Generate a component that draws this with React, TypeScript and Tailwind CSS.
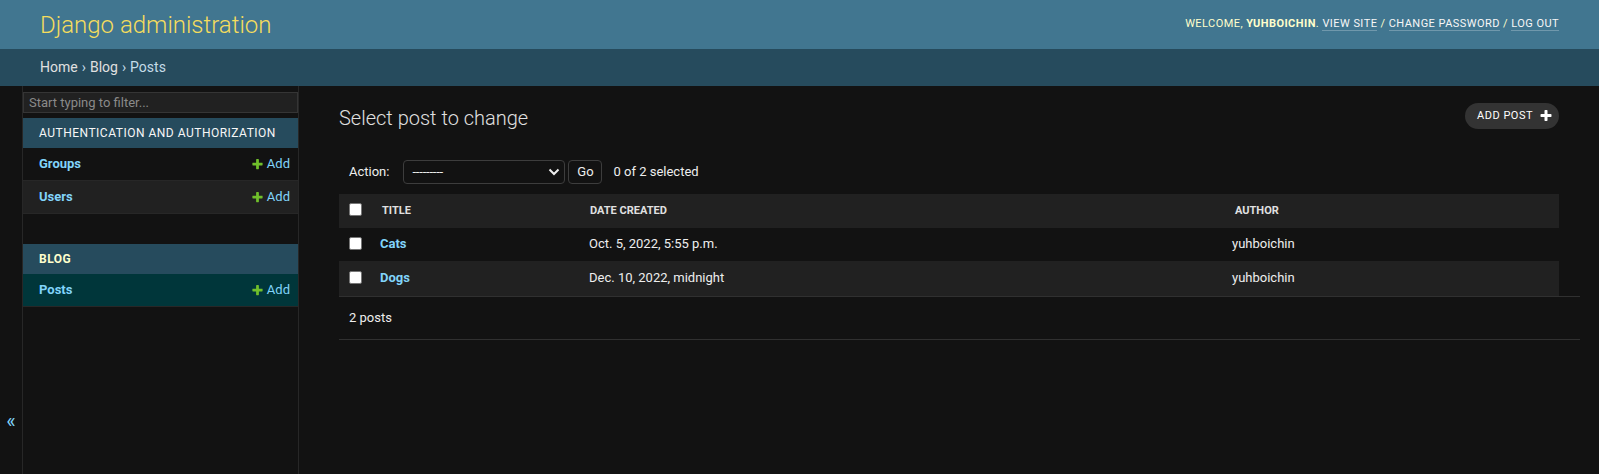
import React from "react";

const PLUS_PATH =
  "M1600 736v192q0 40-28 68t-68 28h-416v416q0 40-28 68t-68 28h-192q-40 0-68-28t-28-68v-416h-416q-40 0-68-28t-28-68v-192q0-40 28-68t68-28h416v-416q0-40 28-68t68-28h192q40 0 68 28t28 68v416h416q40 0 68 28t28 68z";

function PlusIcon({ className }: { className?: string }) {
  return (
    <svg viewBox="0 0 1792 1792" className={className} aria-hidden="true">
      <path fill="currentColor" d={PLUS_PATH} />
    </svg>
  );
}

function Check() {
  return <span className="mb-[3px] block h-[13px] w-[13px] rounded-[2px] border border-[#767676] bg-white" />;
}

function AddLink() {
  return (
    <a className="flex items-center gap-[3px] text-[13px] text-[#81d4fa]">
      <PlusIcon className="h-[13px] w-[13px] text-[#70bf2b]" />
      Add
    </a>
  );
}

const sidebarModules = [
  {
    name: "Authentication and Authorization",
    current: false,
    models: [
      { name: "Groups", bg: "bg-[#121212]" },
      { name: "Users", bg: "bg-[#212121]" },
    ],
  },
  {
    name: "Blog",
    current: true,
    models: [{ name: "Posts", bg: "bg-[#00363a]" }],
  },
];

const posts = [
  { title: "Cats", created: "Oct. 5, 2022, 5:55 p.m.", author: "yuhboichin", bg: "bg-[#121212]", h: "h-[33px]" },
  { title: "Dogs", created: "Dec. 10, 2022, midnight", author: "yuhboichin", bg: "bg-[#212121]", h: "h-[35px]" },
];

export default function App() {
  return (
    <div className="flex h-[474px] flex-col overflow-hidden bg-[#121212] font-[Roboto,'Liberation_Sans',sans-serif] text-[#eeeeee]">
      {/* Header */}
      <header className="flex h-[49px] shrink-0 items-center justify-between bg-[#417690] px-10">
        <h1 className="text-[24px] font-light leading-none text-[#f5dd5d]">Django administration</h1>
        <div className="text-[11px] uppercase tracking-[0.45px] text-[#ffffcc]">
          Welcome, <strong className="font-bold">yuhboichin</strong>.{" "}
          <a className="border-b border-white/25 text-[#f7f7f7]">View site</a> /{" "}
          <a className="border-b border-white/25 text-[#f7f7f7]">Change password</a> /{" "}
          <a className="border-b border-white/25 text-[#f7f7f7]">Log out</a>
        </div>
      </header>

      {/* Breadcrumbs */}
      <div className="flex h-[37px] shrink-0 items-center bg-[#264b5d] px-10 text-[14px] text-[#c4dce8]">
        <a className="text-[#e0e0e0]">Home</a>
        <span className="mx-[4px]">›</span>
        <a className="text-[#e0e0e0]">Blog</a>
        <span className="mx-[4px]">›</span>
        <span>Posts</span>
      </div>

      <div className="flex flex-1">
        {/* Sidebar toggle */}
        <div className="flex w-[23px] shrink-0 justify-center border-r border-[#272727] pt-[325px]">
          <span className="text-[20px] leading-[20px] text-[#81d4fa]">«</span>
        </div>

        {/* Sidebar */}
        <nav className="w-[276px] shrink-0 border-r border-[#272727]">
          <input
            className="mt-[6px] mb-[5px] block h-[21px] w-full border border-[#353535] bg-[#212121] px-[5px] text-[13px] text-[#eeeeee] outline-none placeholder:text-[#8a8a8a]"
            placeholder="Start typing to filter..."
          />
          {sidebarModules.map((mod) => (
            <div key={mod.name} className="mb-[30px]">
              <div
                className={`flex h-[30px] items-center bg-[#264b5d] pl-4 text-[12px] uppercase tracking-[0.5px] ${
                  mod.current ? "font-bold text-[#ffffcc]" : "text-[#f7f7f7]"
                }`}
              >
                {mod.name}
              </div>
              {mod.models.map((m) => (
                <div
                  key={m.name}
                  className={`flex h-[33px] items-center justify-between border-b border-[#272727] pl-4 pr-2 ${m.bg}`}
                >
                  <a className="text-[13px] font-bold text-[#81d4fa]">{m.name}</a>
                  <AddLink />
                </div>
              ))}
            </div>
          ))}
        </nav>

        {/* Content */}
        <main className="min-w-0 flex-1 px-10 pt-[17px]">
          <div className="flex items-start justify-between">
            <h1 className="mt-[1px] mb-[1px] text-[20px] font-light leading-[28px] text-[#e0e0e0]">Select post to change</h1>
            <a className="flex h-[26px] items-center gap-[6px] rounded-full bg-[#333333] pl-3 pr-[6px] text-[11px] uppercase tracking-[0.5px] text-white">
              Add post
              <PlusIcon className="h-[14px] w-[14px] text-white" />
            </a>
          </div>

          {/* Actions */}
          <div className="mt-[27px] flex h-[24px] items-center text-[13px]">
            <span className="ml-[10px]">Action:</span>
            <div className="ml-[14px] flex h-[24px] w-[162px] items-center justify-between rounded-[4px] border border-[#3d3d3d] bg-[#121212] pl-[8px] pr-[4px]">
              <span className="tracking-[-0.2px]">---------</span>
              <svg viewBox="0 0 12 8" className="h-[8px] w-[12px]" aria-hidden="true">
                <path d="M1.5 1.5 L6 6 L10.5 1.5" fill="none" stroke="#eeeeee" strokeWidth="2" />
              </svg>
            </div>
            <button className="ml-[3px] flex h-[24px] w-[34px] items-center justify-center rounded-[4px] border border-[#3d3d3d] bg-[#121212] text-[13px] text-[#eeeeee]">
              Go
            </button>
            <span className="ml-[11px]">0 of 2 selected</span>
          </div>

          {/* Results */}
          <div className="mt-[10px]">
            <div className="grid h-[34px] grid-cols-[33px_208px_644px_1fr] items-center bg-[#212121] text-[11px] font-bold uppercase text-[#e0e0e0]">
              <div className="pl-[10px]">
                <Check />
              </div>
              <div className="pl-[10px]">Title</div>
              <div className="pl-[10px]">Date created</div>
              <div className="pl-[11px]">Author</div>
            </div>
            {posts.map((p) => (
              <div
                key={p.title}
                className={`grid ${p.h} grid-cols-[33px_208px_644px_1fr] items-center text-[13px] ${p.bg}`}
              >
                <div className="pl-[10px]">
                  <Check />
                </div>
                <a className="mb-[1px] pl-[8px] font-bold text-[#81d4fa]">{p.title}</a>
                <div className="mb-[1px] pl-[9px]">{p.created}</div>
                <div className="mb-[1px] pl-[8px]">{p.author}</div>
              </div>
            ))}
          </div>

          {/* Paginator */}
          <div className="-mr-[21px] flex h-[44px] items-center border-y border-[#303030] pl-[10px] text-[13px]">
            2 posts
          </div>
        </main>
      </div>
    </div>
  );
}
